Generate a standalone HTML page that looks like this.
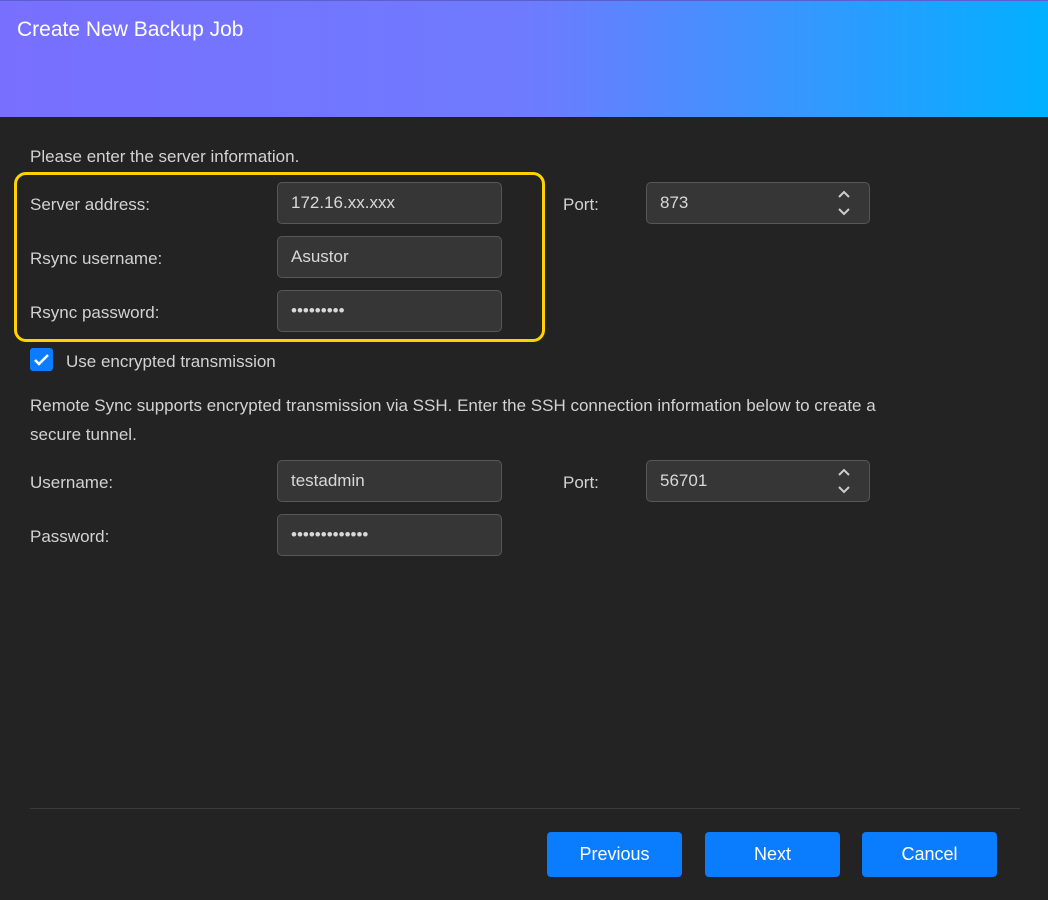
<!DOCTYPE html>
<html><head><style>
*{box-sizing:border-box;margin:0;padding:0}
body{width:1048px;height:900px;background:#232323;font-family:"Liberation Sans",sans-serif;color:#d2d2d2;font-size:17px;position:relative;overflow:hidden}
.hdr{position:absolute;left:0;top:0;width:1048px;height:117px;background:linear-gradient(90deg,#786fff 0%,#6f7bff 50%,#02b0ff 100%);border-top:1px solid #5a5fcc}
.hdr h1{position:absolute;left:17px;top:17px;font-size:21px;font-weight:normal;color:#fff}
.t{position:absolute;white-space:nowrap}
.in{position:absolute;width:225px;height:42px;background:#363636;border:1px solid #575757;border-radius:5px;padding-left:13px;line-height:40px;color:#d8d8d8}
.port{width:224px}
.arr{position:absolute;right:18px;top:5px;font-size:12px;line-height:14px;color:#ccc}
.yb{position:absolute;left:14px;top:172px;width:531px;height:170px;border:3px solid #ffd200;border-radius:12px}
.btn{position:absolute;top:832px;width:135px;height:45px;background:#0a7dff;border-radius:4px;color:#fff;text-align:center;line-height:45px;font-size:18px}
</style></head><body>
<div class="hdr"><h1>Create New Backup Job</h1></div>
<div class="t" style="left:30px;top:147px">Please enter the server information.</div>
<div class="yb"></div>
<div class="t" style="left:30px;top:195px">Server address:</div>
<div class="t" style="left:30px;top:249px">Rsync username:</div>
<div class="t" style="left:30px;top:303px">Rsync password:</div>
<div class="in" style="left:277px;top:182px">172.16.xx.xxx</div>
<div class="in" style="left:277px;top:236px">Asustor</div>
<div class="in" style="left:277px;top:290px">•••••••••</div>
<div class="t" style="left:563px;top:195px">Port:</div>
<div class="in port" style="left:646px;top:182px">873<svg class="arr" width="14" height="30" viewBox="0 0 14 30"><path d="M2 9l5-5 5 5M2 21l5 5 5-5" fill="none" stroke="#ccc" stroke-width="2"/></svg></div>
<div style="position:absolute;left:30px;top:348px;width:23px;height:23px;background:#0a7dff;border-radius:3px"><svg width="23" height="23"><path d="M5 12l4 4 9-9" fill="none" stroke="#fff" stroke-width="2.5"/></svg></div>
<div class="t" style="left:66px;top:352px">Use encrypted transmission</div>
<div class="t" style="left:30px;top:396px">Remote Sync supports encrypted transmission via SSH. Enter the SSH connection information below to create a</div>
<div class="t" style="left:30px;top:425px">secure tunnel.</div>
<div class="t" style="left:30px;top:473px">Username:</div>
<div class="t" style="left:30px;top:527px">Password:</div>
<div class="in" style="left:277px;top:460px">testadmin</div>
<div class="in" style="left:277px;top:514px">•••••••••••••</div>
<div class="t" style="left:563px;top:473px">Port:</div>
<div class="in port" style="left:646px;top:460px">56701<svg class="arr" width="14" height="30" viewBox="0 0 14 30"><path d="M2 9l5-5 5 5M2 21l5 5 5-5" fill="none" stroke="#ccc" stroke-width="2"/></svg></div>
<div style="position:absolute;left:30px;top:808px;width:990px;height:1px;background:#3a3a3a"></div>
<div class="btn" style="left:547px">Previous</div>
<div class="btn" style="left:705px">Next</div>
<div class="btn" style="left:862px">Cancel</div>
</body></html>
